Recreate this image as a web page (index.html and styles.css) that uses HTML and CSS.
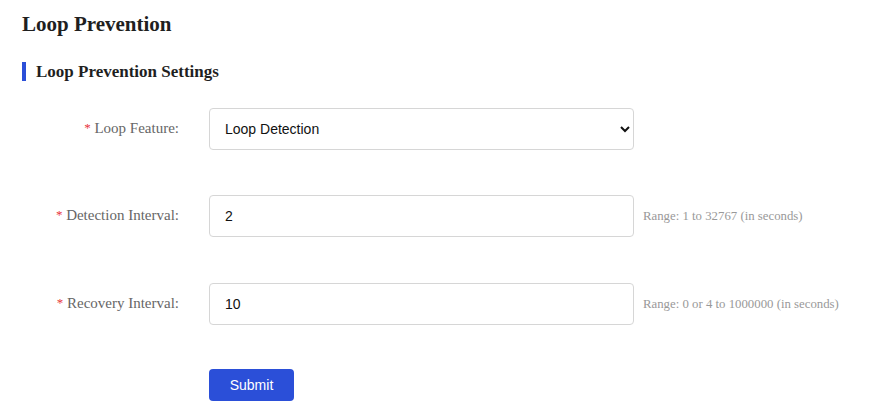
FILE: index.html
```html
<!DOCTYPE html>
<html>
<head>
<meta charset="utf-8">
<link rel="stylesheet" href="styles.css">
</head>
<body>
<div class="page">
  <h1 class="title">Loop Prevention</h1>
  <h2 class="section">Loop Prevention Settings</h2>
  <form class="form">
    <div class="row">
      <label class="label"><span class="req">*</span> Loop Feature:</label>
      <select class="control">
        <option>Loop Detection</option>
      </select>
    </div>
    <div class="row">
      <label class="label"><span class="req">*</span> Detection Interval:</label>
      <input class="control" type="text" value="2">
      <span class="hint">Range: 1 to 32767 (in seconds)</span>
    </div>
    <div class="row row-last">
      <label class="label"><span class="req">*</span> Recovery Interval:</label>
      <input class="control" type="text" value="10">
      <span class="hint">Range: 0 or 4 to 1000000 (in seconds)</span>
    </div>
    <div class="actions">
      <button type="button" class="btn">Submit</button>
    </div>
  </form>
</div>
</body>
</html>
```
FILE: styles.css
```css
html, body {
  margin: 0;
  padding: 0;
  background: #fff;
}
.page {
  padding: 12px 22px 0 22px;
  font-family: "Liberation Serif", "Times New Roman", serif;
  color: #222;
}
.title {
  margin: 0;
  font-size: 21px;
  font-weight: bold;
  line-height: 24px;
  color: #1f1f1f;
}
.section {
  margin: 26px 0 0 0;
  font-size: 17px;
  font-weight: bold;
  line-height: 19px;
  border-left: 4px solid #2b4fd8;
  padding-left: 10px;
  color: #1f1f1f;
}
.form {
  margin-top: 27px;
  display: flex;
  flex-direction: column;
  gap: 45px;
}
.row {
  display: flex;
  align-items: center;
}
.row-last {
  margin-top: 1px;
}
.label {
  width: 157px;
  text-align: right;
  font-size: 15px;
  color: #666;
  margin-right: 30px;
  position: relative;
  top: -1px;
}
.req {
  color: #e8343b;
  font-size: 13px;
  vertical-align: 1px;
}
.control {
  box-sizing: border-box;
  width: 425px;
  height: 42px;
  border: 1px solid #d6d6d6;
  border-radius: 4px;
  background: #fff;
  font-family: "Liberation Sans", Arial, sans-serif;
  font-size: 14px;
  color: #111;
  padding: 0 12px 0 15px;
  outline: none;
  margin: 0;
}
select.control {
  padding-left: 11px;
}
.hint {
  margin-left: 9px;
  font-size: 12.8px;
  color: #999;
}
.actions {
  padding-left: 187px;
  margin-top: -1px;
}
.btn {
  width: 85px;
  height: 32px;
  border: none;
  border-radius: 4px;
  background: #2b4fd8;
  color: #fff;
  font-family: "Liberation Sans", Arial, sans-serif;
  font-size: 14px;
  padding: 0;
  cursor: pointer;
}
```
